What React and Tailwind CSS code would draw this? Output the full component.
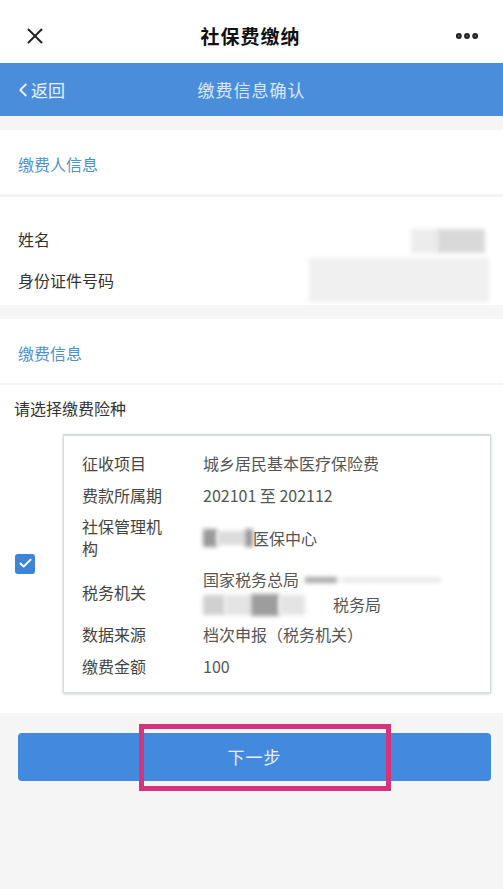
import { X, MoreHorizontal, ChevronLeft, Check } from "lucide-react";

const rows = [
  { label: "征收项目", value: "城乡居民基本医疗保险费" },
  { label: "费款所属期", value: "202101 至 202112" },
];

function Blur({ className }) {
  return <span className={"inline-block blur-[2px] " + className} />;
}

export default function App() {
  return (
    <div className="min-h-[889px] bg-[#f5f5f5] font-['Noto_Sans_CJK_SC','Noto_Sans',sans-serif] text-[#333]">
      {/* top bar */}
      <div className="h-[63px] bg-white flex items-center justify-between px-[22px] pt-[9px]">
        <X className="w-[26px] h-[26px] text-[#222]" strokeWidth={1.8} />
        <div className="text-[19px] font-bold text-[#111] tracking-[1px]">社保费缴纳</div>
        <MoreHorizontal className="w-[28px] h-[28px] text-[#222]" strokeWidth={3} />
      </div>

      {/* blue bar */}
      <div className="h-[53px] bg-[#4a8edb] flex items-center relative">
        <div className="flex items-center pl-[12px] text-[#e8f1fb] text-[17px]">
          <ChevronLeft className="w-[22px] h-[26px] -mr-[3px]" strokeWidth={2} />
          返回
        </div>
        <div className="absolute left-0 right-0 text-center text-[17px] text-[#d9e8fa] tracking-[1px] pointer-events-none">
          缴费信息确认
        </div>
      </div>

      <div className="h-[14px]" />

      {/* payer info */}
      <div className="bg-white h-[67px] flex items-center px-[18px] pt-[4px] text-[#4f90cf] text-[16px] border-b-[3px] border-[#f3f3f3]">
        缴费人信息
      </div>
      <div className="bg-white h-[108px] px-[18px] pt-[28px] text-[16px]">
        <div className="flex items-center justify-between h-[28px]">
          <span>姓名</span>
          <span className="flex mt-[4px]">
            <Blur className="w-[26px] h-[24px] bg-[#ececec]" />
            <Blur className="w-[48px] h-[24px] bg-[#d9d9d9]" />
          </span>
        </div>
        <div className="flex items-center justify-between h-[40px] mt-[7px]">
          <span>身份证件号码</span>
          <span className="flex -mr-[4px]">
            <Blur className="w-[180px] h-[44px] bg-[#f0f0f0]" />
          </span>
        </div>
      </div>

      <div className="h-[14px]" />

      {/* payment info */}
      <div className="bg-white h-[66px] flex items-center px-[18px] pt-[4px] text-[#4f90cf] text-[16px] border-b-[2px] border-[#f3f3f3]">
        缴费信息
      </div>
      <div className="bg-white pb-[20px]">
        <div className="px-[14px] pt-[11px] text-[16px] h-[49px]">请选择缴费险种</div>
        <div className="flex items-center">
          <div className="w-[63px] flex justify-center">
            <span className="w-[20px] h-[20px] rounded-[3px] bg-[#3d84d6] flex items-center justify-center -ml-[13px]">
              <Check className="w-[15px] h-[15px] text-white" strokeWidth={3} />
            </span>
          </div>
          <div className="w-[428px] border border-[#d4dedd] border-t-[2px] shadow-[0_1px_3px_rgba(0,0,0,0.2)] pl-[18px] pr-[8px] pt-[11px] pb-[10px] text-[16px] leading-[22px]">
            {rows.map((r) => (
              <div key={r.label} className="flex py-[5px]">
                <span className="w-[121px] text-[#444]">{r.label}</span>
                <span className="text-[#555]">{r.value}</span>
              </div>
            ))}
            <div className="flex items-center pt-[4px] pb-[2px]">
              <span className="w-[121px] text-[#444] leading-[22px]">社保管理机<br />构</span>
              <span className="text-[#555] flex items-center mt-[2px]">
                <Blur className="w-[14px] h-[18px] bg-[#9a9a9a]" />
                <Blur className="w-[28px] h-[14px] bg-[#dcdcdc]" />
                <Blur className="w-[8px] h-[18px] bg-[#999]" />
                医保中心
              </span>
            </div>
            <div className="flex items-center pt-[6px] pb-[1px]">
              <span className="w-[121px] text-[#444]">税务机关</span>
              <div className="text-[#555] leading-[25px]">
                <div className="flex items-center">
                  国家税务总局
                  <Blur className="w-[32px] h-[6px] bg-[#aaa] ml-[6px]" />
                  <Blur className="w-[100px] h-[4px] bg-[#e2e2e2] ml-[4px]" />
                </div>
                <div className="flex items-center">
                  <Blur className="w-[22px] h-[20px] bg-[#d0d0d0]" />
                  <Blur className="w-[26px] h-[20px] bg-[#e4e4e4]" />
                  <Blur className="w-[28px] h-[22px] bg-[#9d9d9d]" />
                  <Blur className="w-[26px] h-[20px] bg-[#e4e4e4]" />
                  <span className="w-[28px]" />
                  税务局
                </div>
              </div>
            </div>
            <div className="flex py-[5px]">
              <span className="w-[121px] text-[#444]">数据来源</span>
              <span className="text-[#555]">档次申报（税务机关）</span>
            </div>
            <div className="flex py-[5px]">
              <span className="w-[121px] text-[#444]">缴费金额</span>
              <span className="text-[#555]">100</span>
            </div>
          </div>
        </div>
      </div>

      {/* button */}
      <div className="px-[18px] pt-[20px] relative">
        <button className="w-[473px] h-[48px] rounded-[4px] bg-[#438ade] text-[#e6f0fb] text-[17px] tracking-[1px]">
          下一步
        </button>
        <div className="absolute left-[139px] top-[11px] w-[252px] h-[67px] border-[5px] border-[#d6337d] pointer-events-none" />
      </div>
    </div>
  );
}
